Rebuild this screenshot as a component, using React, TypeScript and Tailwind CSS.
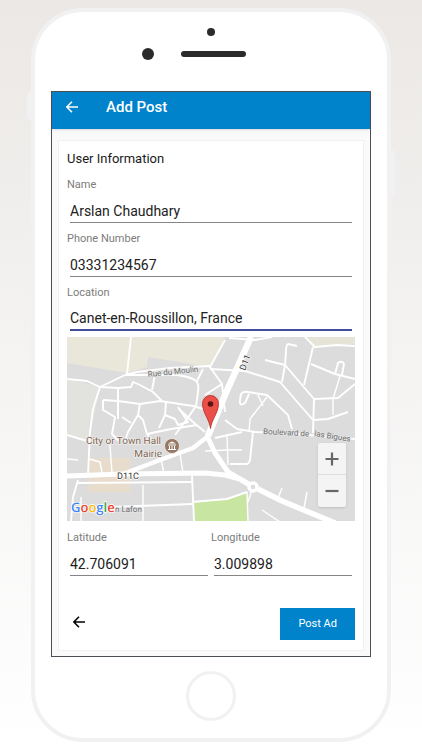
import React, { useState } from 'react';

const minorRoads = [
  'M64 0L60 37',
  'M0 42L20 44L33 50L58 38L70 35L103 31L143 29',
  'M58 38L110 38Q126 40 130 45Q132 48 131 55L129 69',
  'M33 50L51 51L64 50L66 45L73 48L86 55L95 64',
  'M33 50L26 72L23 95L21 138',
  'M36 63L51 64L73 67L93 64L126 69L140 73',
  'M36 63V73L48 80L45 97L52 104',
  'M51 51V82',
  'M88 38L85 53',
  'M136 32L130 44',
  'M73 67L71 78L76 83L80 97L86 104',
  'M55 80L64 86',
  'M71 78L61 95L58 104',
  'M99 65L98 78L92 91',
  'M98 78L108 82L111 88L121 85L111 70',
  'M112 72L126 85L138 95',
  'M129 69L120 82L108 98',
  'M80 97L104 92L130 88',
  'M162 1L188 3L205 0',
  'M158 3L143 30L155 47L158 75',
  'M155 47L138 58',
  'M143 32L178 34L213 45L246 83L261 82L281 75',
  'M238 0L248 10L270 8L288 9',
  'M246 10L237 48',
  'M198 23L218 28L247 62L246 96',
  'M230 9L221 7Q219 8 219 15L218 28L215 45',
  'M244 27L268 37L288 42',
  'M268 37L271 26Q275 23 277 27L275 38',
  'M247 62L271 61L288 47',
  'M182 57L178 66Q172 70 173 63L174 57Q176 54 181 55L200 58L221 78L225 92',
  'M158 83L170 92L188 95L230 97L288 102',
  'M148 101L175 95',
  'M186 95L183 123Q182 127 179 127L163 127',
  'M180 155L160 162L125 165',
  'M11 146L125 145',
  'M0 98L20 104',
  'M11 143L6 160L4 184',
  'M44 170L126 167',
  'M125 139L127 184',
];

const thinRoads = [
  'M273 39L266 62V78',
  'M200 60L183 82L182 95',
  'M191 58L196 69',
  'M160 97L161 128',
  'M138 114L161 113H175',
  'M180 155L181 184',
  'M185 153L181 165',
  'M215 151L211 161',
  'M240 155L237 171',
  'M195 173L213 185',
  'M76 148V184',
  'M22 122L33 125L35 136',
  'M0 122L11 123',
  'M43 108L45 136',
  'M93 118L97 136',
  'M113 116L116 136',
  'M14 160V184',
];

const BackArrow: React.FC = () => (
  <svg viewBox="0 0 12 12" className="h-3 w-3" fill="none" stroke="currentColor" strokeWidth="1.5" aria-hidden="true">
    <path d="M12 6H1M6 0.7L0.9 6L6 11.3" />
  </svg>
);

interface FieldProps {
  id: string;
  label: string;
  value: string;
  active?: boolean;
  onChange: (value: string) => void;
}

const Field: React.FC<FieldProps> = ({ id, label, value, active, onChange }) => (
  <div className="flex min-w-0 flex-col">
    <label htmlFor={id} className="text-[11px] leading-5 text-[#7c7c7c]">
      {label}
    </label>
    <input
      id={id}
      value={value}
      onChange={(e) => onChange(e.target.value)}
      className={`mx-[3px] h-7 min-w-0 bg-transparent pt-1 text-sm text-[#212121] outline-none ${
        active ? 'border-b-2 border-[#434b9b]' : 'border-b border-[#858585]'
      }`}
    />
  </div>
);

const MapView: React.FC = () => (
  <div className="relative mt-1.5">
    <svg
      viewBox="0 0 288 184"
      className="block w-full"
      role="img"
      aria-label="Map"
      textRendering="geometricPrecision"
    >
      <rect width="288" height="184" fill="#dcdcdc" />
      <path d="M0 0H158L143 31L130 28L81 20L80 30L60 36L0 26Z" fill="#e9e6da" />
      <path d="M238 0H288V7L270 8L248 10Z" fill="#e6e3d7" />
      <path d="M0 42L33 50L22 104L0 98Z" fill="#e2e3df" />
      <path d="M22 121H63V155H21Z" fill="#e8dccd" />
      <path d="M126 166L160 162L181 156V184H127Z" fill="#c9e5a2" />

      <g fill="none" stroke="#fff" strokeLinejoin="round">
        {thinRoads.map((d) => (
          <path key={d} d={d} strokeWidth="1.4" />
        ))}
        {minorRoads.map((d) => (
          <path key={d} d={d} strokeWidth="1.9" />
        ))}
        <path d="M184 0L158 58L140 100L126 111L93 123L56 137" strokeWidth="4.5" />
        <path d="M184 0L158 58L141 99" strokeWidth="6.5" />
        <path d="M0 139L56 137L138 136L158 138L173 142L185 149" strokeWidth="5" />
        <path d="M141 101L148 116L161 135L183 148" strokeWidth="5" />
        <path d="M191 152L215 164L268 186" strokeWidth="5.5" />
        <circle cx="186" cy="150" r="4" fill="#dcdcdc" strokeWidth="3.5" />
      </g>

      <g
        fill="#6f6f6f"
        stroke="#e6e6e6"
        strokeWidth="1.5"
        paintOrder="stroke"
        strokeLinejoin="round"
        fontSize="8"
      >
        <text x="81" y="40" transform="rotate(-6 81 40)">Rue du Moulin</text>
        <text x="196" y="97" transform="rotate(3 196 97)">Boulevard de</text>
        <text x="247" y="99" transform="rotate(9 247 99)">las Bigues</text>
        <text x="48" y="175">n Lafon</text>
        <text x="50" y="142" fontSize="9" fill="#333" stroke="#fff">D11C</text>
        <text x="178" y="34" fontSize="9" fill="#333" stroke="#fff" transform="rotate(-68 178 34)">D11</text>
        <g fill="#806551" fontSize="10" textAnchor="end" stroke="#f3f3f3">
          <text x="94" y="107">City or Town Hall</text>
          <text x="95" y="120">Mairie</text>
        </g>
      </g>

      {/* Town hall */}
      <circle cx="105" cy="109" r="7.5" fill="#967864" stroke="#f1ece8" strokeWidth="0.8" />
      <path d="M101 106.5L105 104.5L109 106.5ZM101 107.5H109V108.5H101ZM102 109H103V112H102ZM104.5 109H105.5V112H104.5ZM107 109H108V112H107ZM101 112H109V113H101Z" fill="#fff" />

      {/* Marker */}
      <path
        d="M143.5 91.5C142.5 82 135.5 76 135.5 66.5A8 8 0 0 1 151.5 66.5C151.5 76 144.5 82 143.5 91.5Z"
        fill="#ea4f48"
        stroke="#b8322b"
        strokeWidth="0.9"
      />
      <circle cx="143.5" cy="67" r="2.8" fill="#5c1512" />

      <text x="4" y="175" fontSize="13" fontWeight="600" stroke="#fff" strokeWidth="1.5" paintOrder="stroke" fontFamily="'Open Sans', sans-serif">
        <tspan fill="#4285f4">G</tspan>
        <tspan fill="#ea4335">o</tspan>
        <tspan fill="#fbbc05">o</tspan>
        <tspan fill="#4285f4">g</tspan>
        <tspan fill="#34a853">l</tspan>
        <tspan fill="#ea4335">e</tspan>
      </text>
    </svg>

    <div className="absolute right-[9px] bottom-3.5 flex w-7 flex-col divide-y divide-[#dedede] rounded-xs bg-[#f4f4f4] text-[#666] shadow">
      <button aria-label="Zoom in" className="flex h-8 items-center justify-center">
        <svg viewBox="0 0 14 14" className="h-3.5 w-3.5" stroke="currentColor" strokeWidth="2.2">
          <path d="M0.5 7H13.5M7 0.5V13.5" />
        </svg>
      </button>
      <button aria-label="Zoom out" className="flex h-8 items-center justify-center">
        <svg viewBox="0 0 14 14" className="h-3.5 w-3.5" stroke="currentColor" strokeWidth="2.2">
          <path d="M0.5 7H13.5" />
        </svg>
      </button>
    </div>
  </div>
);

const AddPost: React.FC = () => {
  const [form, setForm] = useState({
    name: 'Arslan Chaudhary',
    phone: '03331234567',
    location: 'Canet-en-Roussillon, France',
    latitude: '42.706091',
    longitude: '3.009898',
  });

  const update = (key: keyof typeof form) => (value: string) => {
    setForm({ ...form, [key]: value });
  };

  return (
    <div className="border border-[#4a5056] bg-[#fafafa]">
      <header className="flex items-start bg-[#0083cb] px-3.5 pt-[3px] pb-2.5 text-white shadow">
        <button aria-label="Back" className="mr-7 flex h-6 items-center">
          <BackArrow />
        </button>
        <h1 className="text-[15px] leading-6 font-medium">Add Post</h1>
      </header>

      <form
        onSubmit={(e) => e.preventDefault()}
        className="mx-1.5 mt-[11px] mb-[5px] border border-[#f1f1f1] bg-white px-2 pt-2 pb-2.5"
      >
        <div className="flex flex-col gap-1.5">
          <h2 className="text-[13px] leading-5 text-[#1a1a1a]">User Information</h2>
          <Field id="name" label="Name" value={form.name} onChange={update('name')} />
          <Field id="phone" label="Phone Number" value={form.phone} onChange={update('phone')} />
          <Field id="location" label="Location" value={form.location} onChange={update('location')} active />
        </div>

        <MapView />

        <div className="mt-[7px] grid grid-cols-2">
          <Field id="latitude" label="Latitude" value={form.latitude} onChange={update('latitude')} />
          <Field id="longitude" label="Longitude" value={form.longitude} onChange={update('longitude')} />
        </div>

        <div className="mt-8 flex items-start justify-between">
          <button type="button" aria-label="Previous step" className="flex h-7 items-center px-1.5 text-black">
            <BackArrow />
          </button>
          <button type="submit" className="h-8 bg-[#0083cb] px-[18px] text-[11px] text-white">
            Post Ad
          </button>
        </div>
      </form>
    </div>
  );
};

const App: React.FC = () => (
  <div className="min-h-screen overflow-hidden bg-linear-to-b from-[#ebe8e5] via-[#f5f4f3] to-white px-[31px] py-2 font-[Roboto,sans-serif]">
    <div className="relative rounded-[52px] border-4 border-[#f1f1f1] bg-white px-4">
      {/* Side buttons */}
      <span className="absolute top-20 -left-2 h-7 w-1 rounded-l-sm bg-[#f1f1f1]" />
      <span className="absolute top-[138px] -right-2 h-12 w-1 rounded-r-sm bg-[#f1f1f1]" />

      <div className="flex flex-col items-center pt-4">
        <span className="h-2 w-2 rounded-full bg-[#2b2b2b]" />
        <div className="mt-3 flex items-center gap-[27px]">
          <span className="h-3 w-3 rounded-full bg-[#2b2b2b]" />
          <span className="h-1.5 w-[65px] rounded-full bg-[#2b2b2b]" />
          <span className="w-2" />
        </div>
      </div>

      <div className="mt-[31px]">
        <AddPost />
      </div>

      <div className="flex justify-center pt-[14px] pb-[17px]">
        <button aria-label="Home" className="h-[50px] w-[50px] rounded-full border-3 border-[#f1f1f1]" />
      </div>
    </div>
  </div>
);

export default App;
